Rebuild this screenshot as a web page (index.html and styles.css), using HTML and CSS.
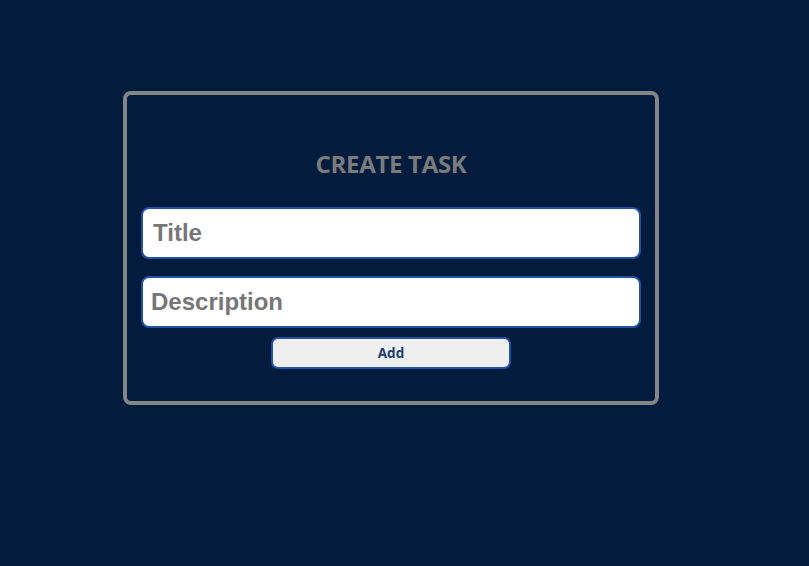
FILE: index.html
```html
<!DOCTYPE html>
<html>
<head>
<meta charset="utf-8">
<link rel="stylesheet" href="styles.css">
</head>
<body>
<div class="card">
  <h2 class="heading">CREATE TASK</h2>
  <input class="field field-title" type="text" placeholder="Title">
  <input class="field field-desc" type="text" placeholder="Description">
  <button class="add-btn">Add</button>
</div>
</body>
</html>
```
FILE: styles.css
```css
html, body {
  margin: 0;
  padding: 0;
  background: #031b3c;
  height: 100%;
}
body {
  font-family: "Liberation Sans", Arial, sans-serif;
}
.card {
  box-sizing: border-box;
  margin: 91px 0 0 123px;
  width: 536px;
  border: 4px solid #858585;
  border-radius: 8px;
  padding: 53px 14px 32px 14px;
  display: flex;
  flex-direction: column;
  align-items: center;
}
.heading {
  margin: 0 0 27px;
  font-family: "Open Sans", sans-serif;
  font-weight: 700;
  font-size: 24px;
  line-height: 32px;
  color: #7b7b7b;
  letter-spacing: -0.3px;
}
.field {
  box-sizing: border-box;
  width: 100%;
  height: 52px;
  border: 2px solid #2052a6;
  border-radius: 8px;
  background: #fff;
  padding: 0 8px;
  font-family: "Liberation Sans", Arial, sans-serif;
  font-weight: 700;
  font-size: 24px;
  color: #333;
  outline: none;
}
.field::placeholder {
  color: #767676;
}
.field-title {
  margin-bottom: 17px;
  padding-left: 10px;
}
.add-btn {
  box-sizing: border-box;
  margin-top: 9px;
  width: 240px;
  height: 32px;
  border: 2px solid #2052a6;
  border-radius: 7px;
  background: #efefef;
  font-family: "Open Sans", sans-serif;
  font-weight: 700;
  font-size: 13.5px;
  color: #1c3f72;
  padding: 0;
}
```
